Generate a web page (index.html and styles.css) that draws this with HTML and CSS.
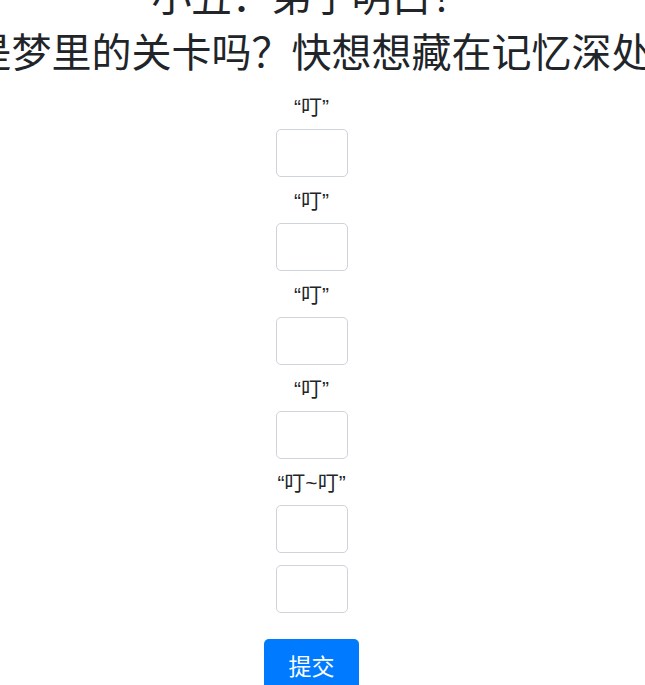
FILE: index.html
```html
<!DOCTYPE html>
<html lang="zh-CN">
<head>
  <meta charset="UTF-8" />
  <title>叮</title>
  <link rel="stylesheet" href="styles.css">
</head>
<body>
  <div class="page">
    <h1 class="title">小丑：弟子明白！</h1>
    <h1 class="title">是梦里的关卡吗？快想想藏在记忆深处</h1>

    <form class="code-form" onsubmit="return false">
      <label class="sound">“叮”</label>
      <input type="text" class="code-box">
      <label class="sound">“叮”</label>
      <input type="text" class="code-box">
      <label class="sound">“叮”</label>
      <input type="text" class="code-box">
      <label class="sound">“叮”</label>
      <input type="text" class="code-box">
      <label class="sound">“叮~叮”</label>
      <input type="text" class="code-box">
      <input type="text" class="code-box">
      <button type="submit" class="submit-btn">提交</button>
    </form>
  </div>
</body>
</html>
```

FILE: styles.css
```css
* {
  box-sizing: border-box;
}

body {
  margin: 0;
  font-family: "Liberation Sans", "Noto Sans CJK SC", sans-serif;
  color: #212529;
  background: #fff;
  overflow: hidden;
}

.page {
  width: 623px;
}

.title {
  display: flex;
  justify-content: center;
  white-space: nowrap;
  margin: 0 0 8px;
  font-size: 40px;
  font-weight: 400;
  line-height: 48px;
}

.title:first-child {
  margin-top: -27px;
}

.code-form {
  display: flex;
  flex-direction: column;
  align-items: center;
  padding-top: 10px;
}

.sound {
  font-size: 21px;
  line-height: 24px;
  margin-bottom: 10px;
}

.code-box {
  width: 72px;
  height: 48px;
  margin: 0 0 12px;
  border: 1px solid #ced4da;
  border-radius: 5px;
  font-size: 20px;
  text-align: center;
}

.submit-btn {
  margin-top: 14px;
  width: 95px;
  height: 52px;
  padding: 0;
  border: none;
  border-radius: 5px;
  background: #007bff;
  color: #fff;
  font-family: inherit;
  font-size: 23px;
  cursor: pointer;
}
```
